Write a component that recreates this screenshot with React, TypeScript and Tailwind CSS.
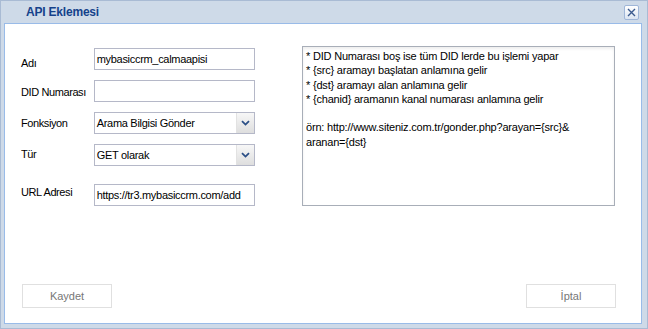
import React from "react";

const font = "font-['Liberation_Sans',Arial,sans-serif]";

function Chevron() {
  return (
    <svg width="9" height="6" viewBox="0 0 9 6" className="block">
      <path d="M1 1.2 L4.5 4.6 L8 1.2" fill="none" stroke="#2b4f86" strokeWidth="1.8" />
    </svg>
  );
}

function TextBox({ value }: { value: string }) {
  return (
    <div className="h-[22px] w-[162px] border border-[#b5b8c8] bg-white pl-[2px] flex items-center overflow-hidden whitespace-nowrap text-[11px] tracking-[-0.3px] text-black">
      {value}
    </div>
  );
}

function Select({ value }: { value: string }) {
  return (
    <div className="h-[22px] w-[162px] border border-[#b5b8c8] bg-white flex items-stretch">
      <div className="flex-1 pl-[2px] flex items-center whitespace-nowrap text-[11px] tracking-[-0.3px] text-black">{value}</div>
      <div className="w-[18px] border-l border-[#e2e2e2] bg-gradient-to-b from-[#f7f7f7] to-[#dedede] flex items-center justify-center">
        <Chevron />
      </div>
    </div>
  );
}

const rows = [
  { label: "Adı", kind: "text", value: "mybasiccrm_calmaapisi", labelCls: "pt-[9px]", rowCls: "" },
  { label: "DID Numarası", kind: "text", value: "", labelCls: "pt-[6px]", rowCls: "mt-[10px]" },
  { label: "Fonksiyon", kind: "select", value: "Arama Bilgisi Gönder", labelCls: "pt-[5px]", rowCls: "mt-[10px]" },
  { label: "Tür", kind: "select", value: "GET olarak", labelCls: "pt-[4px]", rowCls: "mt-[10px]" },
  { label: "URL Adresi", kind: "text", value: "https://tr3.mybasiccrm.com/add", labelCls: "pt-[2px]", rowCls: "mt-[18px]" },
];

const notes = [
  "* DID Numarası boş ise tüm DID lerde bu işlemi yapar",
  "* {src} aramayı başlatan anlamına gelir",
  "* {dst} aramayı alan anlamına gelir",
  "* {chanid} aramanın kanal numarası anlamına gelir",
  "",
  "örn: http://www.siteniz.com.tr/gonder.php?arayan={src}&",
  "aranan={dst}",
];

export default function App() {
  return (
    <div className={`${font} w-[648px] h-[329px] bg-[#cedae8] border border-[#a9bbd4] flex flex-col`}>
      {/* title bar */}
      <div className="h-[22px] flex items-center justify-between pl-[25px] pr-[8px]">
        <span className="text-[12px] font-bold tracking-[-0.2px] text-[#15428b]">API Eklemesi</span>
        <button className="w-[15px] h-[15px] border border-[#9fb6d8] rounded-[2px] bg-gradient-to-b from-white to-[#dbe5f2] flex items-center justify-center">
          <svg width="9" height="9" viewBox="0 0 9 9">
            <path d="M1 1 L8 8 M8 1 L1 8" stroke="#3a5a8e" strokeWidth="1.4" />
          </svg>
        </button>
      </div>

      {/* body */}
      <div className="ml-[3px] mr-[5px] h-[301px] border border-[#99bbe8] bg-white flex flex-col">
        <div className="flex items-start">
          <div className="pl-[16px] pt-[24px] w-[250px]">
            {rows.map((r) => (
              <div key={r.label} className={`flex items-start ${r.rowCls}`}>
                <div className={`w-[73px] text-[11px] tracking-[-0.4px] text-black leading-[13px] ${r.labelCls}`}>{r.label}</div>
                {r.kind === "select" ? <Select value={r.value} /> : <TextBox value={r.value} />}
              </div>
            ))}
          </div>
          <div className="ml-[47px] mt-[22px] w-[313px] h-[160px] border border-[#a8aeb8] bg-white shadow-[inset_0_2px_3px_rgba(0,0,0,0.07)] pl-[3px] pt-[2px] text-[11px] tracking-[-0.2px] leading-[14.3px] text-black">
            {notes.map((n, i) => (
              <div key={i} className="h-[14.3px] whitespace-pre">{n}</div>
            ))}
          </div>
        </div>

        <div className="mt-auto mb-[15px] flex justify-between pl-[17px] pr-[25px]">
          <button className="w-[90px] h-[24px] border border-[#e0e0e0] bg-white text-[11px] text-[#777]">Kaydet</button>
          <button className="w-[90px] h-[24px] border border-[#e0e0e0] bg-white text-[11px] text-[#777]">İptal</button>
        </div>
      </div>
    </div>
  );
}
